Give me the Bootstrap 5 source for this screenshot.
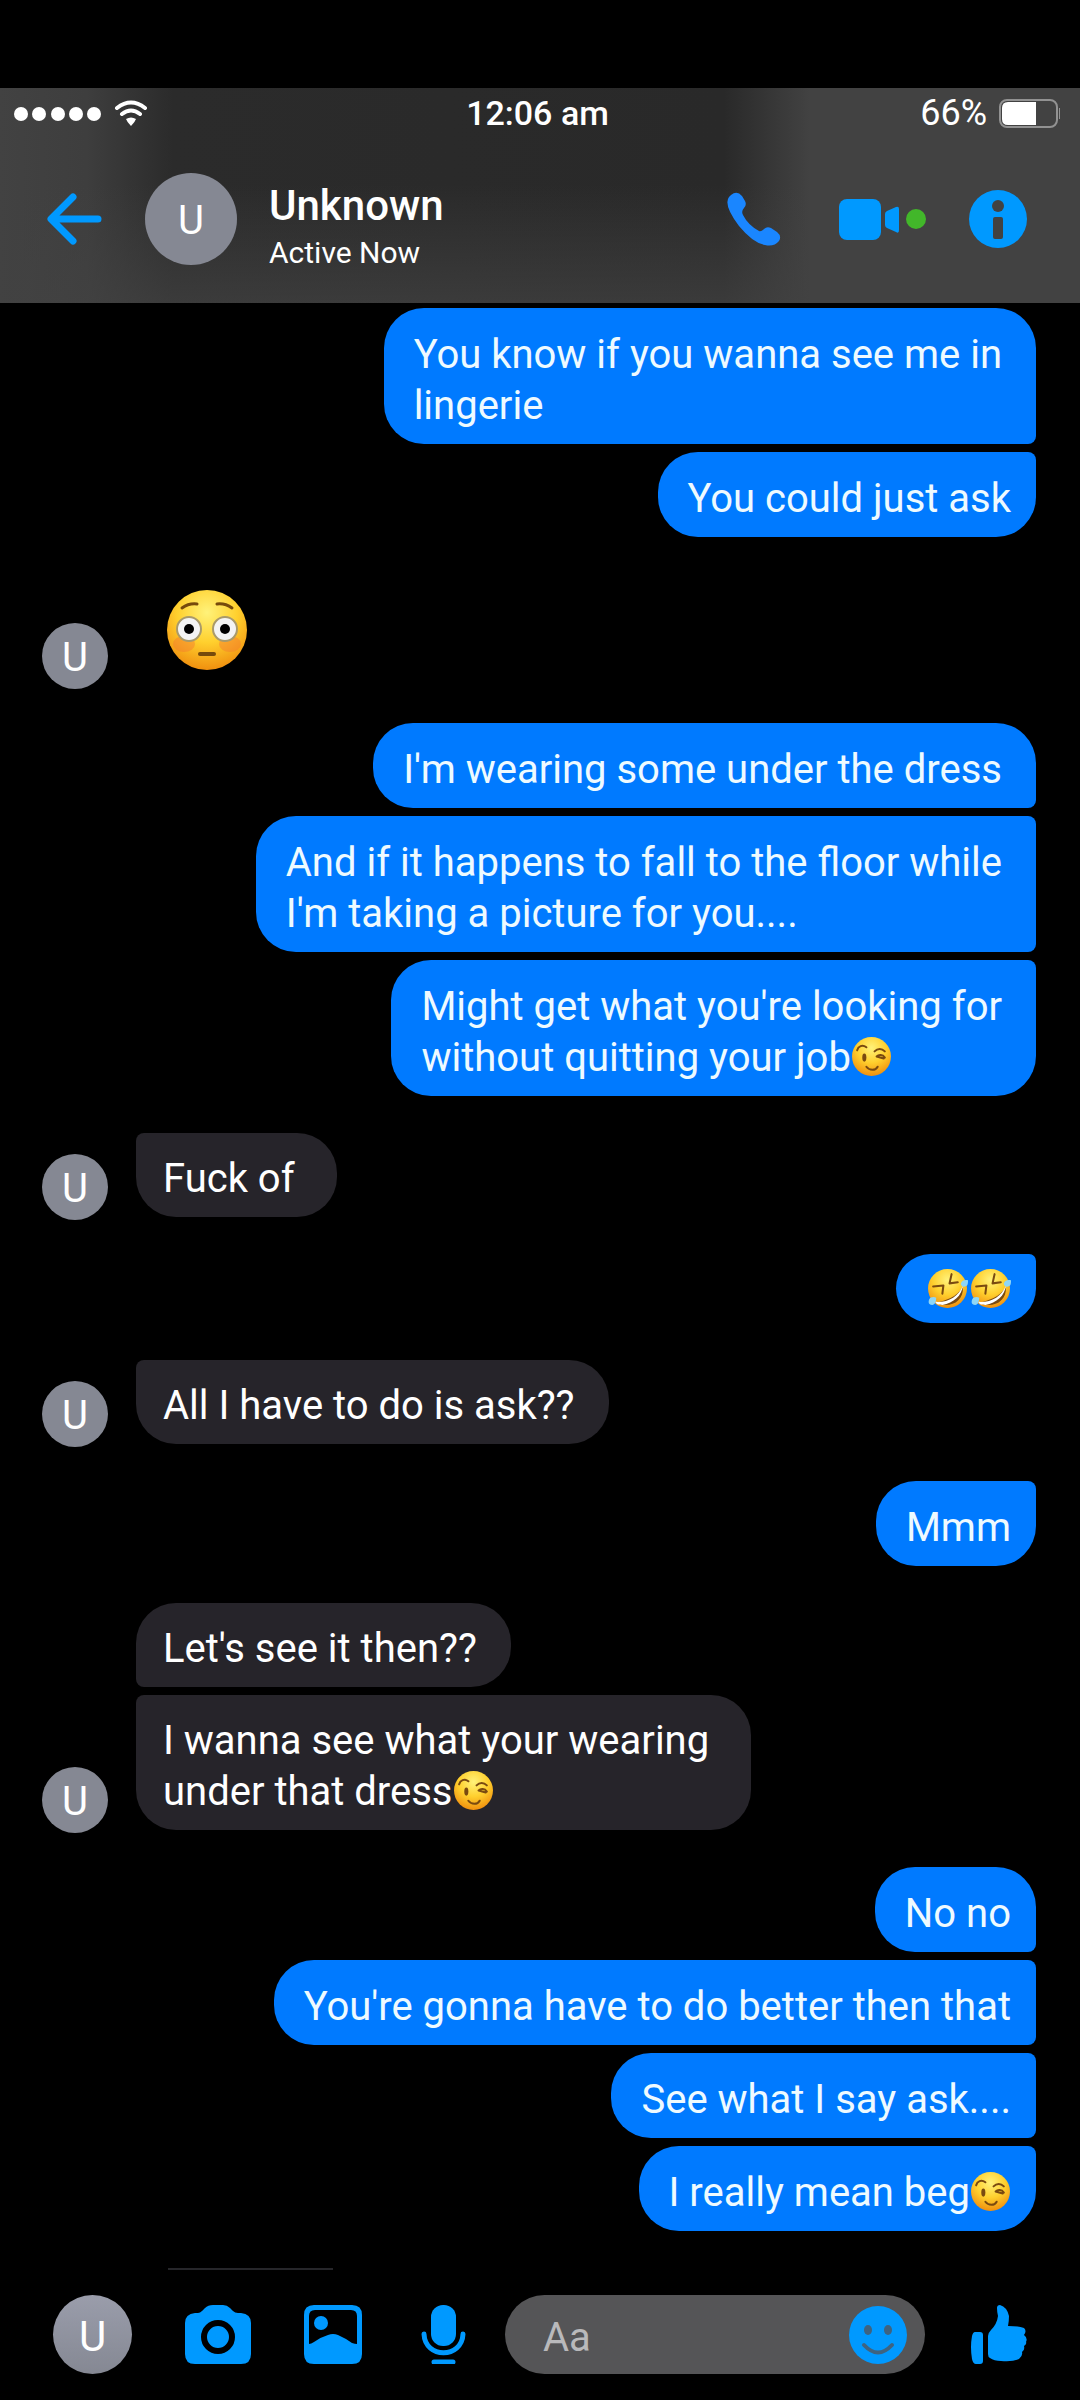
<!DOCTYPE html>
<html lang="en">
<head>
<meta charset="utf-8">
<meta name="viewport" content="width=device-width, initial-scale=1">
<title>Chat</title>
<link href="https://cdn.jsdelivr.net/npm/bootstrap@5.3.0/dist/css/bootstrap.min.css" rel="stylesheet">
<style>
  body { background: #000; color: #fff; font-family: Roboto, "Liberation Sans", sans-serif; padding-top: 88px; }
  svg { display: block; flex: none; }
  .chat-head {
    background:
      linear-gradient(180deg, rgba(66,66,66,0) 45%, rgba(66,66,66,.7) 100%),
      linear-gradient(90deg, #424242 0, #3e3e3e 8%, #2b2b2b 16%, #292929 67%, #424242 75%);
  }
  .status-bar { height: 50px; padding: 0 19px 0 14px; font-size: 36px; line-height: 40px; }
  .status-bar > div { flex: 1 1 0; }
  .clock { font-size: 34px; font-weight: 500; }
  .title-bar { height: 165px; padding: 0 53px 4px 47px; }
  .icon-btn { background: none; border: 0; padding: 0; color: #0099ff; flex: none; }
  .gap-video { margin-left: 58px; }
  .gap-info { margin-left: 42px; }
  .avatar-dot { border-radius: 50%; background: #858893; display: flex; align-items: center; justify-content: center; flex: none; padding-top: 4px; }
  .avatar-lg { width: 92px; height: 92px; font-size: 40px; margin: 0 32px 0 43px; }
  .avatar-sm { width: 66px; height: 66px; font-size: 40px; margin: 0 28px -3px 42px; }
  .avatar-me { width: 79px; height: 79px; font-size: 42px; background: linear-gradient(#9a9dab, #858893); }
  .peer-name { font-size: 42px; line-height: 50px; font-weight: 500; margin: 0; }
  .peer-state { font-size: 30px; line-height: 44px; margin: 0; }
  .peer { padding-top: 18px; }
  .thread { padding-top: 5px; gap: 37px; }
  .run { gap: 8px; }
  .run-out { padding-right: 44px; }
  .bubble { font-size: 40px; line-height: 51px; border-radius: 40px; margin: 0; white-space: nowrap; }
  .run-out .bubble { background: #007aff; color: #eefaff; padding: 21px 25px 13px 30px; border-top-right-radius: 8px; border-bottom-right-radius: 8px; }
  .run-out .bubble:first-child:not(.follow) { border-top-right-radius: 40px; }
  .run-out .bubble:last-child { border-bottom-right-radius: 40px; }
  .run-out .bubble.wrapped { padding-right: 34px; }
  .run-in .bubble { background: #26242a; padding: 20px 34px 13px 27px; border-top-left-radius: 8px; }
  .run-in .bubble.wrapped { padding-right: 42px; }
  .run-in .bubble.opener { border-top-left-radius: 40px; border-bottom-left-radius: 8px; }
  .run-out .bubble.laughs { padding: 14px 25px 14px 31px; gap: 2px; }
  .face { display: inline-block; width: 41px; height: 41px; vertical-align: -6px; }
  .loose-emoji { margin: 16px 0 16px 31px; }
  .next-edge { width: 165px; height: 2px; margin-left: 168px; background: #26262a; }
  .composer { padding: 25px 53px 26px; }
  .composer-tools { gap: 53px; }
  .mic-btn { margin-left: 6px; }
  .entry { background: #555557; border-radius: 40px; height: 79px; padding: 0 18px 0 38px; flex: 1 1 0; min-width: 0; margin: 0 46px 0 39px; }
  .entry input { background: none; border: 0; outline: 0; color: #fff; font-size: 40px; flex: 1 1 0; min-width: 0; padding: 6px 0 0; }
  .entry input::placeholder { color: #b9b9bb; opacity: 1; }
</style>
<script src="https://cdn.jsdelivr.net/npm/bootstrap@5.3.0/dist/js/bootstrap.bundle.min.js"></script>
</head>
<body class="d-flex flex-column min-vh-100">

<svg width="0" height="0" class="position-absolute" aria-hidden="true">
  <defs>
    <radialGradient id="skin" cx="50%" cy="28%" r="75%">
      <stop offset="0" stop-color="#fff27a"/><stop offset=".5" stop-color="#ffd02e"/><stop offset="1" stop-color="#ef8a0c"/>
    </radialGradient>
    <symbol id="wink" viewBox="0 0 40 40">
      <circle cx="20" cy="20" r="19" fill="url(#skin)"/>
      <g fill="none" stroke="#7a4a10" stroke-width="2" stroke-linecap="round">
        <path d="M6 14c1-4 5-6 9-3M23 15c3-3 7-3 10 0M25 20c2-2 6-2 8 1M25 20l7 2M15 30c3 4 9 4 11 0"/>
      </g>
      <ellipse cx="13" cy="21" rx="2" ry="4" fill="#7a4a10"/>
    </symbol>
    <symbol id="rofl" viewBox="0 0 40 40">
      <circle cx="20" cy="20" r="19" fill="url(#skin)"/>
      <path d="M35 19C36 33 22 40 8 34C18 32 29 28 35 19Z" fill="#7a4a10"/>
      <path d="M35 17C31 28 20 34 8 33C9 36 12 36 15 36C26 34 34 27 35 17Z" fill="#fff"/>
      <path d="M6 18l10-1-1 8M24 6l-2 9 8-1" fill="none" stroke="#7a4a10" stroke-width="2" stroke-linecap="round" stroke-linejoin="round"/>
      <path d="M2 31c1-3 5-3 7-2 0 3-1 7-4 7-3 0-4-2-3-5ZM33 15c1-3 4-4 7-3 0 3 0 6-3 6-2 1-4-1-4-3Z" fill="#8fd6f5"/>
    </symbol>
  </defs>
</svg>

<header class="chat-head">
  <div class="status-bar d-flex align-items-center">
    <div class="d-flex align-items-center">
      <svg width="134" height="28" viewBox="0 0 134 28" fill="#fff" role="img" aria-label="Signal and Wi-Fi">
        <circle cx="7" cy="15" r="7"/><circle cx="25" cy="15" r="7"/><circle cx="44" cy="15" r="7"/><circle cx="62" cy="15" r="7"/><circle cx="80" cy="15" r="7"/>
        <g fill="none" stroke="#fff" stroke-width="4" stroke-linecap="round"><path d="M103 9Q117-2 131 9M108 15Q117 8 126 15"/></g>
        <path d="M112 20Q117 17 122 20Q121 23 117 27Q113 23 112 20Z"/>
      </svg>
    </div>
    <span class="clock">12:06 am</span>
    <div class="d-flex align-items-center justify-content-end">
      <span>66%</span>
      <svg class="ms-2" width="66" height="30" viewBox="0 0 66 30" role="img" aria-label="Battery 66 percent">
        <rect x="5" y="2" width="57" height="27" rx="7" fill="none" stroke="#929292" stroke-width="2"/>
        <path d="M13 4H41V27H13Q7 27 7 21V10Q7 4 13 4Z" fill="#fff"/><rect x="64" y="10" width="1" height="11" fill="#929292"/>
      </svg>
    </div>
  </div>
  <div class="title-bar d-flex align-items-center">
    <button class="icon-btn" type="button" aria-label="Back">
      <svg width="55" height="52" viewBox="0 0 55 52" fill="none" stroke="currentColor" stroke-width="7" stroke-linecap="round" stroke-linejoin="round"><path d="M26 4L4 26L26 48M5 26H51"/></svg>
    </button>
    <span class="avatar-dot avatar-lg">U</span>
    <div class="peer flex-grow-1">
      <h1 class="peer-name">Unknown</h1>
      <p class="peer-state">Active Now</p>
    </div>
    <div class="d-flex align-items-center">
      <button class="icon-btn" type="button" aria-label="Call">
        <svg width="54" height="56" viewBox="0 0 54 56" fill="#1a86ff"><path d="M4 4Q10-1 15 5L18 10Q20 14 17 17Q14 20 16 24Q21 34 32 40Q34 41 37 38Q40 35 44 37L50 41Q55 45 52 50Q47 56 38 54Q26 52 12 35Q-4 14 2 6Z"/></svg>
      </button>
      <button class="icon-btn gap-video" type="button" aria-label="Video call">
        <svg width="88" height="42" viewBox="0 0 88 42"><rect y="1" width="42" height="41" rx="8" fill="currentColor"/><path d="M46 16Q46 14 48 13L57 9Q60 8 60 11V32Q60 36 57 34L48 30Q46 29 46 27Z" fill="currentColor"/><circle cx="77" cy="21" r="10" fill="#42b72a"/></svg>
      </button>
      <button class="icon-btn gap-info" type="button" aria-label="Details">
        <svg width="58" height="58" viewBox="0 0 58 58"><circle cx="29" cy="29" r="29" fill="currentColor"/><circle cx="29" cy="16" r="6" fill="#424242"/><rect x="24" y="27" width="10" height="22" rx="2" fill="#424242"/></svg>
      </button>
    </div>
  </div>
</header>

<main class="thread d-flex flex-column flex-grow-1">
  <div class="run run-out d-flex flex-column align-items-end">
    <p class="bubble wrapped">You know if you wanna see me in<br>lingerie</p>
    <p class="bubble">You could just ask</p>
  </div>
  <div class="run-in d-flex align-items-end">
    <span class="avatar-dot avatar-sm">U</span>
    <svg class="loose-emoji" width="80" height="80" viewBox="0 0 80 80" role="img" aria-label="Flushed face">
      <circle cx="40" cy="40" r="40" fill="url(#skin)"/>
      <ellipse cx="17" cy="54" rx="11" ry="8" fill="#f47b30" opacity=".45"/><ellipse cx="63" cy="54" rx="11" ry="8" fill="#f47b30" opacity=".45"/>
      <circle cx="22" cy="39" r="12" fill="#f4f4f4" stroke="#a99a6b" stroke-width="2"/><circle cx="58" cy="39" r="12" fill="#f4f4f4" stroke="#a99a6b" stroke-width="2"/>
      <circle cx="22" cy="39" r="5"/><circle cx="58" cy="39" r="5"/>
      <g fill="none" stroke="#764a0c" stroke-width="4" stroke-linecap="round"><path d="M15 18Q22 13 30 14M50 14Q58 13 65 18" stroke-width="3"/><path d="M33 64H47"/></g>
    </svg>
  </div>
  <div class="run run-out d-flex flex-column align-items-end">
    <p class="bubble wrapped">I'm wearing some under the dress</p>
    <p class="bubble wrapped">And if it happens to fall to the floor while<br>I'm taking a picture for you....</p>
    <p class="bubble wrapped">Might get what you're looking for<br>without quitting your job<svg class="face" role="img" aria-label="Winking face"><use href="#wink"/></svg></p>
  </div>
  <div class="run-in d-flex align-items-end">
    <span class="avatar-dot avatar-sm">U</span>
    <p class="bubble wrapped">Fuck of</p>
  </div>
  <div class="run run-out d-flex flex-column align-items-end">
    <p class="bubble laughs follow d-flex"><svg class="face" role="img" aria-label="Rolling on the floor laughing"><use href="#rofl"/></svg><svg class="face" role="img" aria-label="Rolling on the floor laughing"><use href="#rofl"/></svg></p>
  </div>
  <div class="run-in d-flex align-items-end">
    <span class="avatar-dot avatar-sm">U</span>
    <p class="bubble">All I have to do is ask??</p>
  </div>
  <div class="run run-out d-flex flex-column align-items-end">
    <p class="bubble follow">Mmm</p>
  </div>
  <div class="run-in d-flex align-items-end">
    <span class="avatar-dot avatar-sm">U</span>
    <div class="run d-flex flex-column align-items-start">
      <p class="bubble opener">Let's see it then??</p>
      <p class="bubble wrapped">I wanna see what your wearing<br>under that dress<svg class="face" role="img" aria-label="Winking face"><use href="#wink"/></svg></p>
    </div>
  </div>
  <div class="run run-out d-flex flex-column align-items-end">
    <p class="bubble">No no</p>
    <p class="bubble">You're gonna have to do better then that</p>
    <p class="bubble">See what I say ask....</p>
    <p class="bubble">I really mean beg<svg class="face" role="img" aria-label="Winking face"><use href="#wink"/></svg></p>
  </div>
  <div class="next-edge"></div>
</main>

<footer class="composer d-flex align-items-center">
  <div class="composer-tools d-flex align-items-center">
    <span class="avatar-dot avatar-me">U</span>
    <button class="icon-btn" type="button" aria-label="Camera">
      <svg width="66" height="59" viewBox="0 0 66 59"><path d="M10 8H13Q15 8 17 6L20 3Q23 0 28 0H38Q42 0 45 3L48 6Q50 8 53 8H56Q66 9 66 18V49Q66 59 56 59H10Q0 59 0 49V18Q0 9 10 8Z" fill="currentColor"/><circle cx="33" cy="32" r="14" fill="currentColor" stroke="#000" stroke-width="6"/></svg>
    </button>
    <button class="icon-btn" type="button" aria-label="Photos">
      <svg width="58" height="59" viewBox="0 0 58 59"><path fill="currentColor" fill-rule="evenodd" d="M10 0H48Q58 0 58 10V49Q58 59 48 59H10Q0 59 0 49V10Q0 0 10 0ZM11 5Q5 5 5 11V39Q7 39 10 37Q17 32 24 30Q29 28 34 30Q41 33 48 38Q51 39 53 39V11Q53 5 47 5Z"/><circle cx="17" cy="18" r="7" fill="currentColor"/></svg>
    </button>
    <button class="icon-btn mic-btn" type="button" aria-label="Voice message">
      <svg width="45" height="59" viewBox="0 0 45 59"><rect x="10" width="25" height="41" rx="12" fill="currentColor"/><g fill="none" stroke="currentColor" stroke-width="5" stroke-linecap="round"><path d="M3 29C4 54 41 54 42 29M13 57H32"/></g></svg>
    </button>
  </div>
  <div class="entry d-flex align-items-center">
    <input type="text" placeholder="Aa" aria-label="Message">
    <button class="icon-btn" type="button" aria-label="Emoji">
      <svg width="58" height="58" viewBox="0 0 58 58"><circle cx="29" cy="29" r="29" fill="currentColor"/><ellipse cx="19" cy="24" rx="4" ry="5" fill="#3f6380"/><ellipse cx="39" cy="24" rx="4" ry="5" fill="#3f6380"/><path d="M15 39Q29 54 43 39" fill="none" stroke="#3f6380" stroke-width="4" stroke-linecap="round"/></svg>
    </button>
  </div>
  <button class="icon-btn" type="button" aria-label="Like">
    <svg width="56" height="59" viewBox="0 0 56 59" fill="currentColor"><path d="M4 27H9Q12 27 12 30V56Q12 59 9 59H5Q2 59 1 54Q-1 42 1 31Q2 27 4 27ZM17 31Q17 28 20 25Q26 19 27 11Q26 7 26 3Q26 0 29 0Q36 2 38 11Q38 16 37 21Q48 21 53 23Q56 26 53 30Q57 33 55 37Q56 39 53 41Q54 45 51 47Q52 51 48 54Q42 57 30 56Q23 56 19 53Q17 52 17 49Z"/></svg>
  </button>
</footer>
</body>
</html>
